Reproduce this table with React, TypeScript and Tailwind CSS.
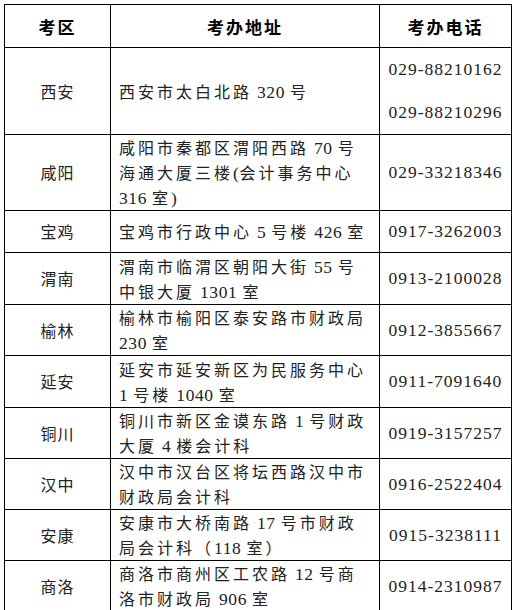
import React from "react";

type Row = { area: string; addr: string[]; phone: string[]; h: string };

const rows: Row[] = [
  { area: "西安", addr: ["西安市太白北路 320 号"], phone: ["029-88210162", "029-88210296"], h: "h-[87px]" },
  { area: "咸阳", addr: ["咸阳市秦都区渭阳西路 70 号", "海通大厦三楼(会计事务中心", "316 室)"], phone: ["029-33218346"], h: "h-[76px]" },
  { area: "宝鸡", addr: ["宝鸡市行政中心 5 号楼 426 室"], phone: ["0917-3262003"], h: "h-[42px]" },
  { area: "渭南", addr: ["渭南市临渭区朝阳大街 55 号", "中银大厦 1301 室"], phone: ["0913-2100028"], h: "h-[52px]" },
  { area: "榆林", addr: ["榆林市榆阳区泰安路市财政局", "230 室"], phone: ["0912-3855667"], h: "h-[49px]" },
  { area: "延安", addr: ["延安市延安新区为民服务中心", "1 号楼 1040 室"], phone: ["0911-7091640"], h: "h-[52px]" },
  { area: "铜川", addr: ["铜川市新区金谟东路 1 号财政", "大厦 4 楼会计科"], phone: ["0919-3157257"], h: "h-[49px]" },
  { area: "汉中", addr: ["汉中市汉台区将坛西路汉中市", "财政局会计科"], phone: ["0916-2522404"], h: "h-[50px]" },
  { area: "安康", addr: ["安康市大桥南路 17 号市财政", "局会计科（118 室）"], phone: ["0915-3238111"], h: "h-[49px]" },
  { area: "商洛", addr: ["商洛市商州区工农路 12 号商", "洛市财政局 906 室"], phone: ["0914-2310987"], h: "h-[51px]" },
];

const CJK = /[\u3000-\u9fff\uff00-\uffef]/;

function Mixed({ text }: { text: string }) {
  const parts = text.split(/([\u3000-\u9fff\uff00-\uffef]+)/).filter((p) => p.length > 0);
  return (
    <>
      {parts.map((p, i) =>
        CJK.test(p) ? (
          <span key={i} className="leading-none text-[16px] tracking-[3px]">
            {p}
          </span>
        ) : (
          <span key={i} className="leading-none font-['Liberation_Serif',serif] text-[17.5px] tracking-[0.6px]">
            {p}
          </span>
        )
      )}
    </>
  );
}

export default function App() {
  return (
    <div className="bg-white w-[520px] h-[610px] pl-[4px] pt-[4px] text-[#222] font-['Noto_Sans_CJK_SC',sans-serif]">
      <table className="border-collapse table-fixed w-[507px]">
        <colgroup>
          <col className="w-[106px]" />
          <col className="w-[269px]" />
          <col className="w-[132px]" />
        </colgroup>
        <thead>
          <tr>
            <th className="h-[43px] border border-black text-center align-middle font-bold text-[17px] leading-[25px] tracking-[2px] text-black p-0">
              考区
            </th>
            <th className="h-[43px] border border-black text-center align-middle font-bold text-[17px] leading-[25px] tracking-[2px] text-black p-0">
              考办地址
            </th>
            <th className="h-[43px] border border-black text-center align-middle font-bold text-[17px] leading-[25px] tracking-[2px] text-black p-0">
              考办电话
            </th>
          </tr>
        </thead>
        <tbody>
          {rows.map((r) => (
            <tr key={r.area}>
              <td className={`${r.h} border border-black text-center align-middle p-0 text-[16px] leading-[25px] tracking-[1px]`}>
                {r.area}
              </td>
              <td className={`${r.h} border border-black align-middle py-0 pl-[8px] pr-0`}>
                <div className="flex flex-col">
                  {r.addr.map((l, i) => (
                    <div key={i} className="text-[16px] leading-[25px] whitespace-nowrap">
                      <Mixed text={l} />
                    </div>
                  ))}
                </div>
              </td>
              <td className={`${r.h} border border-black align-middle p-0`}>
                <div className="flex flex-col items-center gap-[18px]">
                  {r.phone.map((p) => (
                    <div
                      key={p}
                      className="leading-[25px] text-[17.5px] tracking-[1px] whitespace-nowrap font-['Liberation_Serif',serif]"
                    >
                      {p}
                    </div>
                  ))}
                </div>
              </td>
            </tr>
          ))}
        </tbody>
      </table>
    </div>
  );
}
